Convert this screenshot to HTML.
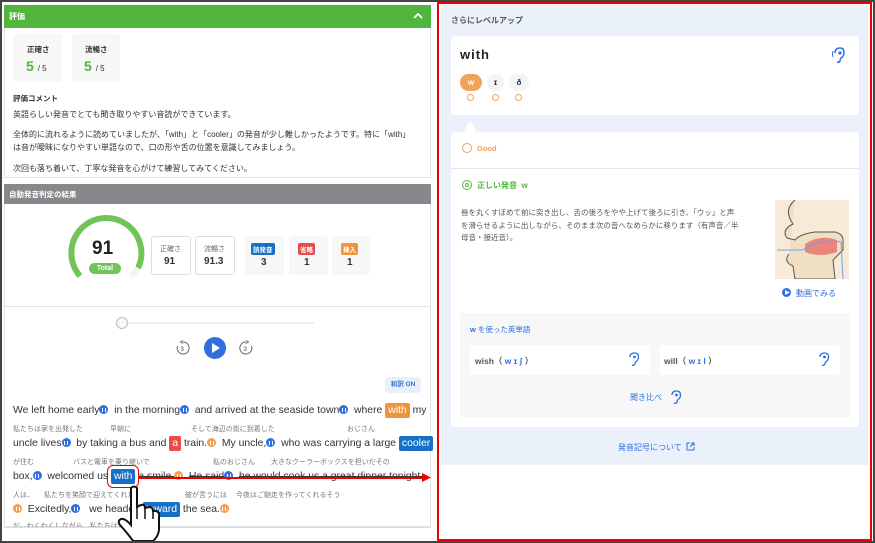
<!DOCTYPE html>
<html><head><meta charset="utf-8"><style>
*{box-sizing:border-box;margin:0;padding:0}
body{width:875px;height:543px;overflow:hidden;background:#fff;font-family:"Liberation Sans","Noto Sans CJK JP",sans-serif;position:relative;color:#333}
.a{position:absolute;white-space:nowrap}
.frame{position:absolute;left:0;top:0;width:875px;height:543px;border:2px solid #444}
.sb{background:#f7f7f7;border-radius:3px}
.bx{border:1px solid #ddd;border-radius:3px;background:#fff}
.w{font-size:10.4px;color:#333}
.tr{font-size:7px;color:#777}
.dot{display:inline-block;width:9px;height:9px;border-radius:50%;background:#2f6fe0;vertical-align:-1px;position:relative}
.dot:after{content:"";position:absolute;left:2.5px;top:2.5px;width:4px;height:4px;border-left:1px solid #fff;border-right:1px solid #fff;box-sizing:border-box}
.dot.o{background:#f0a050}
.hl{color:#fff;padding:2px 3px;border-radius:2px}
</style></head><body>
<!-- left -->
<div class="a" style="left:4px;top:5px;width:427px;height:23px;background:#52b53d"></div>
<div class="a" style="left:9px;top:11px;font-size:8px;color:#fff;font-weight:bold">評価</div>
<svg class="a" style="left:413px;top:12px" width="10" height="8"><path d="M1 6 L5 2 L9 6" stroke="#fff" stroke-width="1.8" fill="none"/></svg>
<div class="a" style="left:4px;top:28px;width:427px;height:150px;border:1px solid #e3e3e3;border-top:none"></div>
<div class="a sb" style="left:13px;top:34px;width:49px;height:48px"></div>
<div class="a sb" style="left:72px;top:34px;width:48px;height:48px"></div>
<div class="a" style="left:27px;top:44px;font-size:7.5px;font-weight:bold">正確さ</div>
<div class="a" style="left:85px;top:44px;font-size:7.5px;font-weight:bold">流暢さ</div>
<div class="a" style="left:26px;top:58px;font-size:14px;font-weight:bold;color:#52b53d">5 <span style="font-size:8px;color:#333;font-weight:normal">/ 5</span></div>
<div class="a" style="left:84px;top:58px;font-size:14px;font-weight:bold;color:#52b53d">5 <span style="font-size:8px;color:#333;font-weight:normal">/ 5</span></div>
<div class="a" style="left:13px;top:93px;font-size:7.5px;font-weight:bold">評価コメント</div>
<div class="a" style="left:13px;top:108px;font-size:8px;line-height:13px">英語らしい発音でとても聞き取りやすい音読ができています。</div>
<div class="a" style="left:13px;top:128px;font-size:8px;line-height:13px">全体的に流れるように読めていましたが、「with」と「cooler」の発音が少し難しかったようです。特に「with」<br>は音が曖昧になりやすい単語なので、口の形や舌の位置を意識してみましょう。</div>
<div class="a" style="left:13px;top:162px;font-size:8px;line-height:13px">次回も落ち着いて、丁寧な発音を心がけて練習してみてください。</div>
<div class="a" style="left:4px;top:184px;width:427px;height:20px;background:#86888b"></div>
<div class="a" style="left:9px;top:189px;font-size:7.5px;color:#fff;font-weight:bold">自動発音判定の結果</div>
<div class="a" style="left:4px;top:204px;width:427px;height:323px;border:1px solid #e3e3e3;border-top:none"></div>
<svg class="a" style="left:66px;top:213px" width="80" height="80"><path d="M14 63 A35 35 0 1 1 72 55" stroke="#70c45a" stroke-width="6" fill="none"/><path d="M72 55 A35 35 0 0 1 65 63" stroke="#f3f3f3" stroke-width="6" fill="none"/></svg>
<div class="a" style="left:92px;top:238px;font-size:19px;font-weight:bold;color:#222">91</div>
<div class="a" style="left:89px;top:263px;width:32px;height:11px;border-radius:6px;background:#70c45a;color:#fff;font-size:7px;font-weight:bold;text-align:center;line-height:11px">Total</div>
<div class="a bx" style="left:151px;top:236px;width:40px;height:39px"></div>
<div class="a bx" style="left:195px;top:236px;width:40px;height:39px"></div>
<div class="a" style="left:160px;top:244px;font-size:7px;color:#666">正確さ</div>
<div class="a" style="left:204px;top:244px;font-size:7px;color:#666">流暢さ</div>
<div class="a" style="left:164px;top:256px;font-size:10px;font-weight:bold">91</div>
<div class="a" style="left:204px;top:256px;font-size:10px;font-weight:bold">91.3</div>
<div class="a sb" style="left:245px;top:236px;width:39px;height:39px"></div>
<div class="a sb" style="left:289px;top:236px;width:39px;height:39px"></div>
<div class="a sb" style="left:332px;top:236px;width:38px;height:39px"></div>
<div class="a" style="left:251px;top:243px;font-size:6.5px;background:#1670c4;color:#fff;padding:1px 2px;border-radius:2px;font-weight:bold">誤発音</div>
<div class="a" style="left:298px;top:243px;font-size:6.5px;background:#e84b4b;color:#fff;padding:1px 2px;border-radius:2px;font-weight:bold">省略</div>
<div class="a" style="left:341px;top:243px;font-size:6.5px;background:#f0943c;color:#fff;padding:1px 2px;border-radius:2px;font-weight:bold">挿入</div>
<div class="a" style="left:261px;top:257px;font-size:10px;font-weight:bold">3</div>
<div class="a" style="left:304px;top:257px;font-size:10px;font-weight:bold">1</div>
<div class="a" style="left:347px;top:257px;font-size:10px;font-weight:bold">1</div>
<div class="a" style="left:4px;top:306px;width:427px;height:1px;background:#e3e3e3"></div>
<div class="a" style="left:122px;top:322px;width:192px;height:2px;background:#eee"></div>
<div class="a" style="left:116px;top:317px;width:12px;height:12px;border-radius:50%;background:#f8f8f8;border:1px solid #bbb"></div>
<svg class="a" style="left:175px;top:340px" width="16" height="16"><path d="M8 2 A6 6 0 1 1 2.5 6" stroke="#666" stroke-width="1" fill="none"/><path d="M8 0.5 L5.5 2 L8 3.5" stroke="#666" fill="none"/><text x="5.5" y="11" font-size="6" fill="#444" font-family="Liberation Sans">3</text></svg>
<div class="a" style="left:204px;top:337px;width:22px;height:22px;border-radius:50%;background:#2f6fe0"></div>
<svg class="a" style="left:211px;top:343px" width="10" height="10"><path d="M1 0 L9 5 L1 10Z" fill="#fff"/></svg>
<svg class="a" style="left:238px;top:340px" width="16" height="16"><path d="M8 2 A6 6 0 1 0 13.5 6" stroke="#666" stroke-width="1" fill="none"/><path d="M8 0.5 L10.5 2 L8 3.5" stroke="#666" fill="none"/><text x="5.5" y="11" font-size="6" fill="#444" font-family="Liberation Sans">3</text></svg>
<div class="a" style="left:385px;top:377px;width:36px;height:16px;border-radius:4px;background:#e8f0fb;color:#3a6fd0;font-size:6.5px;font-weight:bold;text-align:center;line-height:16px">和訳 ON</div>
<div class="a w" style="left:13px;top:405px">We left home early<span class="dot"></span>&nbsp; in the morning<span class="dot"></span>&nbsp; and arrived at the seaside town<span class="dot"></span>&nbsp; where <span class="hl" style="background:#f0943c">with</span> my</div>
<div class="a tr" style="left:13px;top:424px">私たちは家を出発した</div><div class="a tr" style="left:110px;top:424px">早朝に</div><div class="a tr" style="left:191px;top:424px">そして海辺の街に到着した</div><div class="a tr" style="left:347px;top:424px">おじさん</div>
<div class="a w" style="left:13px;top:438px">uncle lives<span class="dot"></span>&nbsp; by taking a bus and <span class="hl" style="background:#e84b4b">a</span> train.<span class="dot o"></span>&nbsp; My uncle,<span class="dot"></span>&nbsp; who was carrying a large <span class="hl" style="background:#1670c4">cooler</span></div>
<div class="a tr" style="left:13px;top:457px">が住む</div><div class="a tr" style="left:73px;top:457px">バスと電車を乗り継いで</div><div class="a tr" style="left:213px;top:457px">私のおじさん</div><div class="a tr" style="left:271px;top:457px">大きなクーラーボックスを担いだその</div>
<div class="a w" style="left:13px;top:471px">box,<span class="dot"></span>&nbsp; welcomed us <span class="hl" style="background:#1670c4;outline:1.5px solid #e00;outline-offset:3px">with</span> <s>a smile.</s><span class="dot o"></span>&nbsp; <s>He said</s><span class="dot"></span>&nbsp; <s>he would cook us a great dinner tonight.</s></div>
<div class="a tr" style="left:13px;top:490px">人は、</div><div class="a tr" style="left:44px;top:490px">私たちを笑顔で迎えてくれた</div><div class="a tr" style="left:185px;top:490px">彼が言うには</div><div class="a tr" style="left:236px;top:490px">今夜はご馳走を作ってくれるそう</div>
<div class="a w" style="left:13px;top:504px"><span class="dot o"></span>&nbsp; Excitedly,<span class="dot"></span>&nbsp;&nbsp; we headed <span class="hl" style="background:#1670c4">toward</span> the sea.<span class="dot o"></span></div>
<div class="a tr" style="left:13px;top:521px">だ。わくわくしながら　私たちは海へ</div>
<div class="a" style="left:4px;top:527px;width:427px;height:13px;background:#fff;border-top:1px solid #ddd"></div>
<div class="a" style="left:138px;top:477px;width:286px;height:1.5px;background:#e00"></div>
<svg class="a" style="left:422px;top:473px" width="9" height="9"><path d="M0 0 L9 4.5 L0 9Z" fill="#e00"/></svg>
<svg class="a" style="left:117px;top:485px" width="45" height="58"><path d="M14 3 Q17 0 20 3 L20 22 L24 20 Q28 19 28 23 L32 22 Q36 22 36 26 L39 26 Q43 27 42 32 L42 45 Q41 52 36 56 L16 56 Q12 50 3 40 Q0 36 4 34 Q8 33 14 40 Z" fill="#fff" stroke="#111" stroke-width="2"/><path d="M20 22 L20 34 M28 23 L28 34 M36 26 L36 34" stroke="#111" stroke-width="1.5"/></svg>
<!-- right -->
<div class="a" style="left:437px;top:2px;width:435px;height:539px;border:2px solid #e00;background:#fff"></div>
<div class="a" style="left:441px;top:5px;width:427px;height:460px;background:#eaf1fb"></div>
<div class="a" style="left:451px;top:15px;font-size:8px;color:#555;font-weight:bold">さらにレベルアップ</div>
<div class="a" style="left:451px;top:36px;width:408px;height:79px;background:#fff;border-radius:3px"></div>
<div class="a" style="left:460px;top:47px;font-size:13px;font-weight:bold;color:#222;letter-spacing:1px">with</div>
<svg class="a" style="left:832px;top:47px" width="14" height="16"><path d="M3 6 Q3 1 8 1 Q12 1 12 6 Q12 9 9 11 Q8 12 8 14 Q7 16 5 15" stroke="#2f6fe0" stroke-width="1.5" fill="none"/><circle cx="8" cy="6" r="1.6" fill="#2f6fe0"/><path d="M1 4 Q0 7 1 10" stroke="#2f6fe0" fill="none"/></svg>
<div class="a" style="left:460px;top:74px;width:22px;height:17px;border-radius:9px;background:#f0a35a;color:#fff;font-size:8px;font-weight:bold;text-align:center;line-height:17px">w</div>
<div class="a" style="left:487px;top:74px;width:17px;height:17px;border-radius:9px;background:#f4f4f4;font-size:8px;font-weight:bold;text-align:center;line-height:17px">ɪ</div>
<div class="a" style="left:509px;top:74px;width:20px;height:17px;border-radius:9px;background:#f4f4f4;font-size:8px;font-weight:bold;text-align:center;line-height:17px">ð</div>
<div class="a" style="left:467px;top:94px;width:7px;height:7px;border-radius:50%;border:1px solid #f0a35a"></div>
<div class="a" style="left:492px;top:94px;width:7px;height:7px;border-radius:50%;border:1px solid #f0a35a"></div>
<div class="a" style="left:515px;top:94px;width:7px;height:7px;border-radius:50%;border:1px solid #f0a35a"></div>
<svg class="a" style="left:463px;top:121px" width="14" height="12"><path d="M0 12 L7 0 L14 12Z" fill="#fff"/></svg>
<div class="a" style="left:451px;top:132px;width:408px;height:295px;background:#fff;border-radius:3px"></div>
<div class="a" style="left:462px;top:143px;width:10px;height:10px;border-radius:50%;border:1.2px solid #f0a35a"></div>
<div class="a" style="left:477px;top:144px;font-size:7.5px;font-weight:bold;color:#f0a35a">Good</div>
<div class="a" style="left:451px;top:168px;width:408px;height:1px;background:#e6e6e6"></div>
<div class="a" style="left:462px;top:180px;width:10px;height:10px;border-radius:50%;border:1.2px solid #52b53d"></div>
<div class="a" style="left:465px;top:183px;width:4px;height:4px;border-radius:50%;border:1px solid #52b53d"></div>
<div class="a" style="left:477px;top:180px;font-size:8px;font-weight:bold;color:#52b53d">正しい発音 &nbsp;w</div>
<div class="a" style="left:461px;top:207px;font-size:7.5px;color:#555;line-height:12.5px">唇を丸くすぼめて前に突き出し、舌の後ろをやや上げて後ろに引き、「ウッ」と声<br>を滑らせるように出しながら、そのまま次の音へなめらかに移ります（有声音／半<br>母音・接近音）。</div>
<svg class="a" style="left:775px;top:200px" width="74" height="79"><rect width="74" height="79" fill="#f7ebd8"/><path d="M20 0 Q8 10 18 24 Q6 30 12 38 L20 40 Q25 34 40 32 L60 32 Q68 34 68 40 L68 50 L58 60 L60 79 L20 79 L18 66 Q8 62 14 54" fill="#f1dfc3" stroke="#555" stroke-width="1"/><path d="M30 44 Q45 34 62 40 L62 52 Q45 58 30 52Z" fill="#e9857a"/><path d="M2 50 L28 50 Q45 38 66 42 L68 79" stroke="#6ea0e8" stroke-width="1" fill="none"/></svg>
<div class="a" style="left:782px;top:288px;width:9px;height:9px;border-radius:50%;background:#2f6fe0"></div>
<svg class="a" style="left:785px;top:290px" width="5" height="5"><path d="M0 0 L5 2.5 L0 5Z" fill="#fff"/></svg>
<div class="a" style="left:796px;top:288px;font-size:8px;color:#2f6fe0">動画でみる</div>
<div class="a" style="left:460px;top:313px;width:390px;height:104px;background:#f7f7f7"></div>
<div class="a" style="left:470px;top:324px;font-size:7.5px;color:#2f6fe0"><b>w</b> を使った英単語</div>
<div class="a" style="left:470px;top:345px;width:180px;height:30px;background:#fff;border-radius:3px"></div>
<div class="a" style="left:660px;top:345px;width:180px;height:30px;background:#fff;border-radius:3px"></div>
<div class="a" style="left:475px;top:355px;font-size:8.5px;font-weight:bold;color:#555">wish（ <span style="color:#2f6fe0">w ɪ ʃ</span> ）</div>
<div class="a" style="left:664px;top:355px;font-size:8.5px;font-weight:bold;color:#555">will（ <span style="color:#2f6fe0">w ɪ l</span> ）</div>
<svg class="a" style="left:628px;top:352px" width="12" height="14"><path d="M2 5 Q2 1 6.5 1 Q10.5 1 10.5 5 Q10.5 8 8 9.5 Q7 10.5 7 12 Q6 14 4 13" stroke="#2f6fe0" stroke-width="1.3" fill="none"/><circle cx="6.5" cy="5" r="1.4" fill="#2f6fe0"/></svg>
<svg class="a" style="left:818px;top:352px" width="12" height="14"><path d="M2 5 Q2 1 6.5 1 Q10.5 1 10.5 5 Q10.5 8 8 9.5 Q7 10.5 7 12 Q6 14 4 13" stroke="#2f6fe0" stroke-width="1.3" fill="none"/><circle cx="6.5" cy="5" r="1.4" fill="#2f6fe0"/></svg>
<div class="a" style="left:630px;top:392px;font-size:8px;color:#2f6fe0">聞き比べ</div>
<svg class="a" style="left:670px;top:390px" width="12" height="14"><path d="M2 5 Q2 1 6.5 1 Q10.5 1 10.5 5 Q10.5 8 8 9.5 Q7 10.5 7 12 Q6 14 4 13" stroke="#2f6fe0" stroke-width="1.3" fill="none"/><circle cx="6.5" cy="5" r="1.4" fill="#2f6fe0"/></svg>
<div class="a" style="left:618px;top:442px;font-size:8px;color:#2f6fe0">発音記号について</div>
<svg class="a" style="left:686px;top:442px" width="9" height="9"><path d="M4 1 L1 1 L1 8 L8 8 L8 5 M5 1 L8 1 L8 4 M8 1 L4 5" stroke="#2f6fe0" fill="none"/></svg>
<div class="frame"></div>
</body></html>
